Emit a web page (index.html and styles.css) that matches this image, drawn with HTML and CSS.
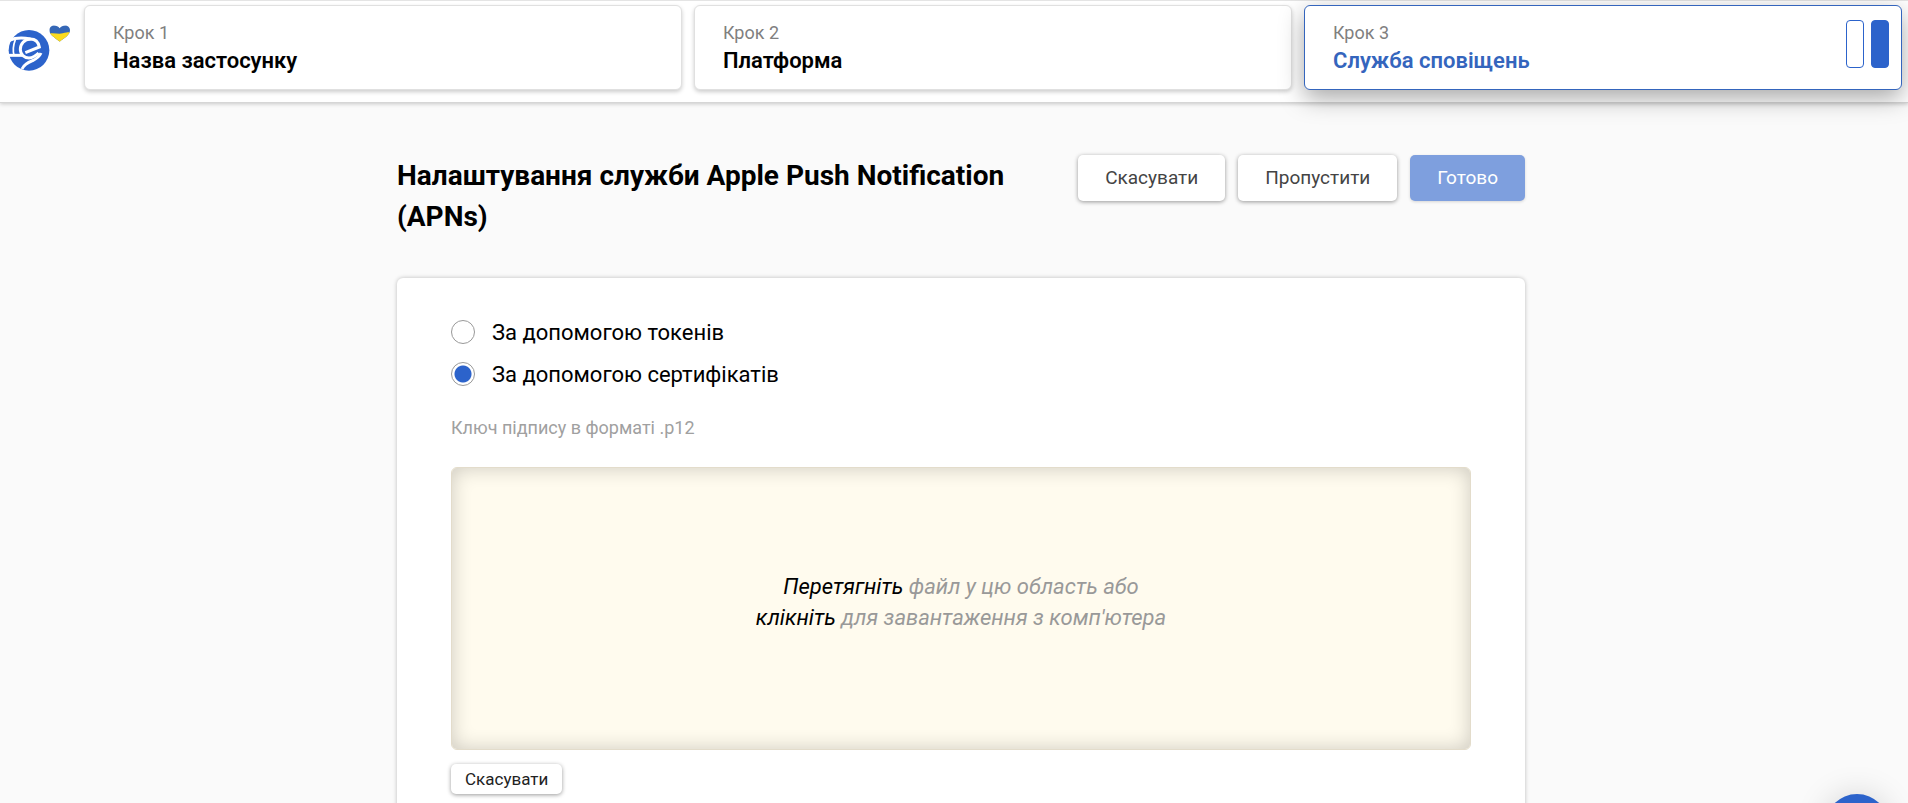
FILE: index.html
```html
<!DOCTYPE html>
<html lang="uk">
<head>
  <meta charset="UTF-8">
  <meta name="viewport" content="width=device-width, initial-scale=1.0">
  <title>Служба сповіщень</title>
  <link rel="stylesheet" href="styles.css">
</head>
<body>

  <header class="header">
    <a href="#" class="logo" aria-label="eSputnik">
      <svg viewBox="0 0 216 156" width="72" height="52">
        <circle cx="87" cy="88" r="61" fill="#2c63cb"/>
        <g fill="none" stroke="#fff" stroke-width="9">
          <path d="M76 95 L118 78 C115 62 104 54 91 54 C73 55 61 69 61 85 C61 101 73 111 87 111 C99 110 108 104 116 96"/>
          <path d="M28 58 C44 51 64 49 91 54"/>
          <path d="M24 103 H67"/>
          <path d="M66 144 C72 130 84 125 98 119 C110 113 118 107 123 96"/>
        </g>
        <path d="M46 56 C40 72 38 88 42 103" fill="none" stroke="#fff" stroke-width="5"/>
        <clipPath id="heart"><path d="M179 62 C165 51 148 42 148 28 C148 11 170 9 179 22 C188 9 210 11 210 28 C210 42 193 52 179 62Z"/></clipPath>
        <g clip-path="url(#heart)">
          <path fill="#3567b6" d="M140 0H216V66H140z"/>
          <path fill="#fbdb1e" d="M140 39 C160 34 174 40 188 37 S206 33 216 35 V70 H140z"/>
        </g>
      </svg>
    </a>

    <nav class="steps">
      <a href="#" class="step">
        <span class="step-number">Крок 1</span>
        <span class="step-name">Назва застосунку</span>
      </a>
      <a href="#" class="step">
        <span class="step-number">Крок 2</span>
        <span class="step-name">Платформа</span>
      </a>
      <a href="#" class="step active">
        <span class="step-number">Крок 3</span>
        <span class="step-name">Служба сповіщень</span>
        <span class="progress"><i></i><i class="filled"></i></span>
      </a>
    </nav>
  </header>

  <main class="main">
    <div class="container">
      <div class="title-row">
        <h1>Налаштування служби Apple Push Notification (APNs)</h1>
        <div class="buttons">
          <button type="button" class="btn">Скасувати</button>
          <button type="button" class="btn">Пропустити</button>
          <button type="button" class="btn btn-primary">Готово</button>
        </div>
      </div>

      <form class="card">
        <div class="radio">
          <input type="radio" name="auth" id="tokens">
          <label for="tokens">За допомогою токенів</label>
        </div>
        <div class="radio">
          <input type="radio" name="auth" id="certificates" checked>
          <label for="certificates">За допомогою сертифікатів</label>
        </div>

        <p class="hint">Ключ підпису в форматі .p12</p>

        <button type="button" class="dropzone">
          <span><b>Перетягніть</b> файл у цю область або</span>
          <span><b>клікніть</b> для завантаження з комп'ютера</span>
        </button>

        <button type="button" class="btn btn-small">Скасувати</button>
      </form>
    </div>
  </main>

  <button type="button" class="chat" aria-label="Чат"></button>

</body>
</html>
```

FILE: styles.css
```css
* {
  margin: 0;
  padding: 0;
  box-sizing: border-box;
  font-family: Roboto, sans-serif;
}

body {
  display: flex;
  flex-direction: column;
  height: 100vh;
  overflow: hidden;
  background: #fafafa;
  color: #000;
}

/* header */
.header {
  position: relative;
  z-index: 1;
  display: flex;
  flex-shrink: 0;
  padding: 4px 6px 12px 0;
  background: #fff;
  border-top: 1px solid #e4e4e4;
  border-bottom: 1px solid #d6d6d6;
  box-shadow: 0 1px 4px rgba(0, 0, 0, 0.2);
}

.logo {
  width: 84px;
  padding-top: 16px;
}

.logo svg {
  display: block;
}

.steps {
  flex: 1;
  display: grid;
  grid-template-columns: repeat(3, 1fr);
  gap: 12px;
}

.step {
  position: relative;
  display: flex;
  flex-direction: column;
  height: 85px;
  padding: 14px 28px;
  background: #fff;
  border: 1px solid #e0e0e0;
  border-radius: 6px;
  box-shadow: 0 2px 4px rgba(0, 0, 0, 0.2);
  color: #000;
  text-decoration: none;
}

.step-number {
  font-size: 18px;
  line-height: 26px;
  color: #808080;
}

.step-name {
  font-size: 22px;
  line-height: 30px;
  font-weight: 600;
}

.step.active {
  border-color: #3465bd;
  box-shadow: 0 8px 24px rgba(0, 0, 0, 0.35);
}

.active .step-name {
  color: #3465bd;
}

.progress {
  position: absolute;
  top: 14px;
  right: 12px;
  display: flex;
  gap: 7px;
}

.progress i {
  width: 18px;
  height: 48px;
  border: 1px solid #2c63cb;
  border-radius: 4px;
}

.progress .filled {
  background: #2c63cb;
}

/* content */
.main {
  flex: 1;
  overflow-y: auto;
  scrollbar-width: none;
  padding: 52px 6px 40px 20px;
}

.container {
  max-width: 1128px;
  margin: 0 auto;
}

.title-row {
  display: flex;
  justify-content: space-between;
  align-items: flex-start;
  gap: 40px;
  margin-bottom: 41px;
}

h1 {
  font-size: 28px;
  line-height: 41px;
  font-weight: 700;
}

.buttons {
  display: flex;
  flex-shrink: 0;
  gap: 13px;
}

.btn {
  height: 46px;
  padding: 0 27px 1px;
  background: #fff;
  border: 0;
  border-radius: 5px;
  box-shadow: 0 1px 4px rgba(0, 0, 0, 0.4);
  font-size: 19px;
  color: #444;
}

.btn-primary {
  background: #7e9fde;
  box-shadow: 0 1px 3px rgba(0, 0, 0, 0.15);
  color: #fff;
}

.btn-small {
  height: 30px;
  padding: 0 14px 1px;
  font-size: 17px;
  color: #222;
}

.card {
  padding: 33px 54px 54px;
  background: #fff;
  border-radius: 6px;
  box-shadow: 0 0 4px rgba(0, 0, 0, 0.25);
}

.radio {
  display: flex;
  align-items: center;
  gap: 17px;
  height: 42px;
  font-size: 22px;
}

.radio input {
  appearance: none;
  width: 24px;
  height: 24px;
  border: 1px solid #999;
  border-radius: 50%;
}

.radio input:checked {
  background: radial-gradient(circle, #2c63cb 8px, #fff 9px);
}

.hint {
  margin: 20px 0 26px;
  font-size: 18px;
  line-height: 26px;
  color: #a0a0a0;
}

.dropzone {
  display: flex;
  flex-direction: column;
  align-items: center;
  justify-content: center;
  width: 100%;
  height: 283px;
  margin-bottom: 14px;
  padding-bottom: 14px;
  background: #fffbee;
  border: 1px solid #e3dccb;
  border-radius: 6px;
  box-shadow: inset 0 0 20px rgba(0, 0, 0, 0.2);
  font-size: 22px;
  line-height: 31px;
  font-style: italic;
  color: #999;
}

.dropzone b {
  font-weight: 400;
  color: #000;
}

/* chat bubble in the corner */
.chat {
  position: fixed;
  right: 19px;
  bottom: -55px;
  width: 64px;
  height: 64px;
  background: #2c63cb;
  border: 0;
  border-radius: 50%;
  box-shadow: 0 0 32px rgba(0, 0, 0, 0.15);
}
```
